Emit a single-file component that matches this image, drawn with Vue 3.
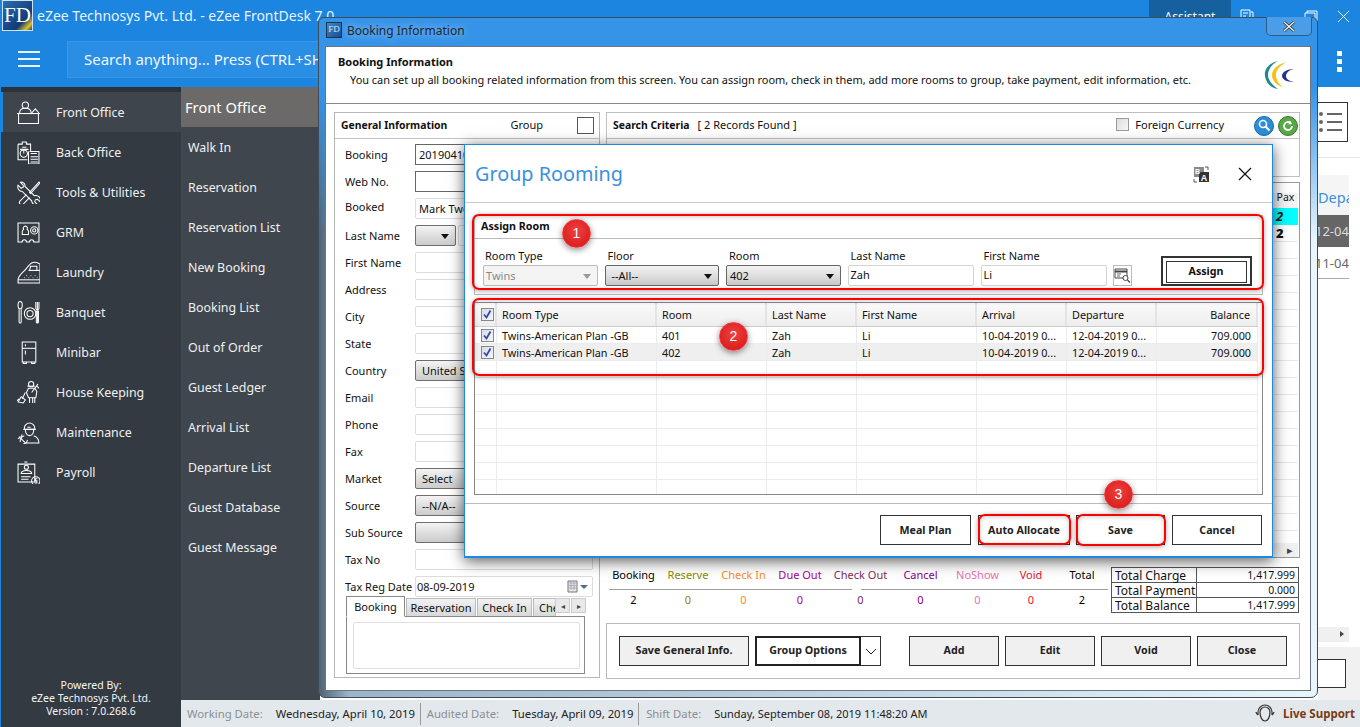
<script setup>
const menu = [
  { t: 'Front Office', p: ['M5 4a3 3 0 1 0 6 0a3 3 0 1 0-6 0', 'M2.5 11.5c0-3 2.200-4.500 5.500-4.500s5.500 1.500 5.500 4.500', 'M14 11.500l3.500-4l3.500 4', 'M0 12h22', 'M1.500 12.500v9h19v-9'] },
  { t: 'Back Office', p: ['M1 3h4V1h4v2h4v7M1 3v15h9', 'M5 6h4M3 8h8', 'M3 12a3.500 3.500 0 1 0 7 0a3.500 3.500 0 1 0-7 0', 'M6.500 12V8.500', 'M12 10h9v12h-10v-12', 'M13 12h6M13 15h7M13 17.500h7M13 20h7'] },
  { t: 'Tools & Utilities', p: ['M3 1l3 3v2l-2 1l-3-3c-1 3 1 6 4 6l9 9c.5 3 3 4.500 6 4l-3-3l.5-2l2-.5l3 2.500c.5-4-2-7-6-6l-9-9c.5-2-1-4-4-4', 'M21 1l-9 10l1 1l9-10z', 'M9 13l-6 6c-1 1-1 2 0 3s2 1 3 0l6-6'] },
  { t: 'GRM', p: ['M1 2h20v18h-5a2 2 0 0 0-4 0h-3a2 2 0 0 0-4 0h-4z', 'M5 13v-3c0-1 .8-1.500 1.300-2a2 2 0 1 1 3.400 0c.5.500 1.300 1 1.300 2v3z', 'M13 9a3.500 3.500 0 1 0 7 0a3.500 3.500 0 1 0-7 0', 'M15 9a1.500 1.500 0 1 0 3 0a1.500 1.500 0 1 0-3 0'] },
  { t: 'Laundry', p: ['M22 3c-3-2-6-2-8-1c-2 1-3 3-5 5c-3 4-8 7-8 11v3h21z', 'M1 18h21', 'M13 5h6v4h-7z', 'M9 14h.6M13 14h.6M17 14h.6M7 16h.6M11 16h.6M15 16h.6M19 16h.6', 'M11 9h11'] },
  { t: 'Banquet', p: ['M1 4a2 3.500 0 1 0 4 0a2 3.500 0 1 0-4 0', 'M2 8v12a1 1 0 0 0 2 0V8', 'M7 12a5.500 5.500 0 1 0 11 0a5.500 5.500 0 1 0-11 0', 'M9.500 12a3 3 0 1 0 6 0a3 3 0 1 0-6 0', 'M18 1v6c0 2 3 2 3 0V1M19.500 1v20', 'M18.500 9v11a1 1 0 0 0 2 0V9'] },
  { t: 'Minibar', p: ['M5 1h13v19H5z', 'M5 7h13', 'M8 3v2M8 9v4', 'M6 20v1.500h3V20M14 20v1.500h3V20'] },
  { t: 'House Keeping', p: ['M11 3a2.500 2.500 0 1 0 5 0a2.500 2.500 0 1 0-5 0', 'M10 5h7', 'M11 7l-2 4l2 5h7l1-6l-2-3z', 'M20 3l-6 8M19 5l2 2', 'M12 16v5M15 16v5M17 16v5', 'M8 11L5 17', 'M1 20l3-5l4 3l-2 3z', 'M2 17l-2 2'] },
  { t: 'Maintenance', p: ['M7 7a5 5 0 0 1 10 0v1h-10z', 'M6 8h12', 'M8 8c0 4 2 6 4 6s4-2 4-6', 'M10 6h3', 'M7 14c-3 1-4 3-4 6', 'M16 14c3 1 5 3 5 7H8', 'M2 15l6 6M1 17l3-2l1-2M6 22l3-1l1-3'] },
  { t: 'Payroll', p: ['M1 3h16v17H1z', 'M7 1h3', 'M7 6a2 2 0 1 0 4 0a2 2 0 1 0-4 0', 'M4 12c0-2 2-3 5-3s5 1 5 3z', 'M4 15h9M4 17.500h7', 'M14 19a4 4 0 1 0 8 0a4 4 0 1 0-8 0', 'M19.500 17h-2v2h1.500v2h-2'] },
]
const links = ['Walk In', 'Reservation', 'Reservation List', 'New Booking', 'Booking List', 'Out of Order', 'Guest Ledger', 'Arrival List', 'Departure List', 'Guest Database', 'Guest Message']
const form = [
  { l: 'Booking', k: 'dark', v: '20190410' },
  { l: 'Web No.', k: 'dark', v: '' },
  { l: 'Booked', k: 'plain', v: 'Mark Twen', up: true },
  { l: 'Last Name', k: 'pair', v: '' },
  { l: 'First Name', k: 'plain', v: '' },
  { l: 'Address', k: 'plain', v: '' },
  { l: 'City', k: 'plain', v: '' },
  { l: 'State', k: 'plain', v: '' },
  { l: 'Country', k: 'sel', v: 'United States' },
  { l: 'Email', k: 'plain', v: '' },
  { l: 'Phone', k: 'plain', v: '' },
  { l: 'Fax', k: 'plain', v: '' },
  { l: 'Market', k: 'sel', v: 'Select' },
  { l: 'Source', k: 'sel', v: '--N/A--' },
  { l: 'Sub Source', k: 'sel', v: '' },
  { l: 'Tax No', k: 'plain', v: '' },
]
const stats = [
  ['Booking', '2', '#000'], ['Reserve', '0', '#8a8a00'], ['Check In', '0', '#f98a1e'], ['Due Out', '0', '#a4009c'],
  ['Check Out', '0', '#7c2c5c'], ['Cancel', '0', '#84008c'], ['NoShow', '0', '#ef6fae'], ['Void', '0', '#e8102c'], ['Total', '2', '#000'],
]
const totals = [['Total Charge', '1,417.999'], ['Total Payment', '0.000'], ['Total Balance', '1,417.999']]
const heads = ['Room Type', 'Room', 'Last Name', 'First Name', 'Arrival', 'Departure', 'Balance']
const rooms = [
  ['Twins-American Plan -GB', '401', 'Zah', 'Li', '10-04-2019 0...', '12-04-2019 0...', '709.000'],
  ['Twins-American Plan -GB', '402', 'Zah', 'Li', '10-04-2019 0...', '12-04-2019 0...', '709.000'],
]
const blanks = 8
const paxRows = 19
</script>

<template>
  <div class="app">
    <header class="top">
      <div class="titlerow">
        <div class="logo"><span>FD</span></div>
        <span class="apptitle">eZee Technosys Pvt. Ltd. - eZee FrontDesk 7.0</span>
        <div class="winctl">
          <span class="assistant">Assistant</span>
          <svg class="ctl" width="14" height="14" viewBox="0 0 14 14" fill="none" stroke="#fff"><path d="M1 1h9v9H1zM3 4h5M3 7h3M11 3h2v10H4v-2" /></svg>
          <svg class="ctl2" width="14" height="14" viewBox="0 0 14 14" fill="none" stroke="#fff"><path d="M1 3h10v10H1zM3 3V1h10v10h-2" /></svg>
          <svg class="ctl3" width="13" height="13" viewBox="0 0 14 14" fill="none" stroke="#fff"><path d="M1 1l12 12M13 1L1 13" /></svg>
        </div>
      </div>
      <div class="searchrow">
        <div class="burger"><i></i><i></i><i></i></div>
        <div class="search">Search anything... Press (CTRL+SHIFT+S)</div>
        <div class="kebab"><i></i><i></i><i></i></div>
      </div>
    </header>

    <div class="shell">
      <aside class="side">
        <div class="strip"></div>
        <nav class="sidenav">
          <a v-for="(m, i) in menu" :key="m.t" class="sideitem" :class="{ active: i === 0 }">
            <svg width="23" height="23" viewBox="0 0 22 22" fill="none" stroke="#fff" stroke-width="1"><path v-for="d in m.p" :key="d" :d="d" /></svg>
            <span>{{ m.t }}</span>
          </a>
        </nav>
        <div class="powered">Powered By:<br />eZee Technosys Pvt. Ltd.<br />Version : 7.0.268.6</div>
      </aside>

      <div class="rightside">
        <div class="mainrow">
          <section class="submenu">
            <h2>Front Office</h2>
            <a v-for="l in links" :key="l">{{ l }}</a>
          </section>
          <section class="peek">
            <div class="peekbar">
              <div class="listbtn"><i></i><i></i><i></i></div>
            </div>
            <div class="peekhead"><span>Depa</span></div>
            <div class="peekdark"><span>12-04</span></div>
            <div class="peekrow"><span>11-04</span></div>
            <div class="peekfill"></div>
            <div class="peekscroll"><b></b></div>
            <div class="peekfoot"><div class="peekbox"></div></div>
          </section>
        </div>
        <footer class="status">
          <span class="slabel">Working Date:</span><span class="sval w1">Wednesday, April 10, 2019</span>
          <span class="slabel">Audited Date:</span><span class="sval w2">Tuesday, April 09, 2019</span>
          <span class="slabel">Shift Date:</span><span class="sval w3">Sunday, September 08, 2019 11:48:20 AM</span>
          <span class="live">
            <svg width="20" height="22" viewBox="0 0 20 22" fill="none" stroke="#333" stroke-width="1.200"><path d="M3 12V9a7 7 0 0 1 14 0v3M5 9a5 5 0 0 1 10 0c0 5-2 9-5 9s-5-4-5-9zM3 12c-1-1-2-2-2-3M17 12c1-1 2-2 2-3" /></svg>
            Live Support
          </span>
        </footer>
      </div>
    </div>

    <!-- Booking Information window -->
    <div class="win">
      <div class="wintitle">
        <div class="minilogo">FD</div>
        <span>Booking Information</span>
        <div class="winclose">
          <svg width="14" height="11" viewBox="0 0 14 11"><path d="M2 1l10 9M12 1L2 10" stroke="#222" stroke-width="2.600" fill="none" /><path d="M2 1l10 9M12 1L2 10" stroke="#fff" stroke-width="1.200" fill="none" /></svg>
        </div>
      </div>
      <div class="wininner">
        <div class="banner">
          <div>
            <b>Booking Information</b>
            <p>You can set up all booking related information from this screen. You can assign room, check in them, add more rooms to group, take payment, edit information, etc.</p>
          </div>
          <svg class="ezee" width="32" height="30" viewBox="0 0 32 30" fill="none">
            <path d="M14 1C5 3 0 9 1 16c1 7 6 12 13 13C8 25 4 20 4 15 4 9 8 4 14 1z" fill="#1f8a8a" />
            <path d="M23 2C14 4 8 9 8 15c0 6 5 10 11 12-4-3-7-7-7-12 0-6 5-10 11-13z" fill="#f2c21a" />
            <path d="M30 9c-7 0-12 3-12 7 0 3 4 6 12 6-5-1-8-3-8-6 0-3 3-6 8-7z" fill="#27348b" />
          </svg>
        </div>

        <div class="columns">
          <section class="general">
            <div class="phead">
              <b>General Information</b>
              <span class="grouplabel">Group</span>
              <span class="bigcheck"></span>
            </div>
            <div class="formrows">
              <div v-for="r in form" :key="r.l" class="frow">
                <label :class="{ up: r.up }">{{ r.l }}</label>
                <div v-if="r.k === 'pair'" class="pair">
                  <div class="fsel small"><em></em></div>
                  <div class="finput plain"></div>
                </div>
                <div v-else-if="r.k === 'sel'" class="fsel"><span>{{ r.v }}</span><em></em></div>
                <div v-else class="finput" :class="r.k">{{ r.v }}</div>
              </div>
              <div class="frow taxdate">
                <label>Tax Reg Date</label>
                <div class="finput plain date">
                  <span>08-09-2019</span>
                  <svg width="22" height="13" viewBox="0 0 22 13" fill="none"><path d="M1 1h9v11H1z" fill="#e6e6e6" stroke="#777" /><path d="M2 3h7M2 5.500h7M2 8h7M4 2v8M7 2v8" stroke="#99a" stroke-width=".7" /><path d="M13 5h8l-4 4z" fill="#556a88" /></svg>
                </div>
              </div>
            </div>
            <div class="tabs">
              <span class="tab on">Booking</span>
              <span class="tab t2">Reservation</span>
              <span class="tab t3">Check In</span>
              <span class="tab t4">Che</span>
              <span class="tabarrows"><i>◂</i><i>▸</i></span>
            </div>
            <div class="tabbody"><div class="tabarea"></div></div>
          </section>

          <div class="rightcol">
            <section class="criteria">
              <div class="phead">
                <b>Search Criteria</b>
                <span class="found">[ 2 Records Found ]</span>
                <span class="foreign"><i class="smallcheck"></i>Foreign Currency</span>
                <svg class="round" width="20" height="20" viewBox="0 0 20 20"><circle cx="10" cy="10" r="9.500" fill="#2a8fd8" stroke="#1a6aa8" /><circle cx="9" cy="8" r="3.500" fill="none" stroke="#fff" stroke-width="1.600" /><path d="M11.500 10.500l4 4" stroke="#fff" stroke-width="2" /></svg>
                <svg class="round" width="20" height="20" viewBox="0 0 20 20"><circle cx="10" cy="10" r="9.500" fill="#58a848" stroke="#3a7a30" /><path d="M14 10a4 4 0 1 1-1.500-3.100" fill="none" stroke="#fff" stroke-width="1.800" /><path d="M12 4.500l2 3.500l-3.500.5z" fill="#fff" /></svg>
              </div>
            </section>

            <section class="bookgrid">
              <div class="paxcol">
                <div class="paxhead">Pax</div>
                <div class="paxcell cyan"><i>2</i></div>
                <div class="paxcell"><b>2</b></div>
                <div v-for="n in paxRows" :key="n" class="paxcell"></div>
              </div>
              <div class="hscroll"><span>▸</span></div>
            </section>

            <section class="summary">
              <div class="stats">
                <div class="statlabels">
                  <span v-for="s in stats" :key="s[0]" :style="{ color: s[2] }">{{ s[0] }}</span>
                </div>
                <div class="statline"></div>
                <div class="statlabels vals">
                  <span v-for="s in stats" :key="s[0]" :style="{ color: s[2] }">{{ s[1] }}</span>
                </div>
              </div>
              <table class="totals">
                <tbody>
                  <tr v-for="t in totals" :key="t[0]"><td>{{ t[0] }}</td><td class="num">{{ t[1] }}</td></tr>
                </tbody>
              </table>
            </section>

            <section class="actions">
              <button class="gray wsave">Save General Info.</button>
              <div class="splitbtn">
                <button class="main">Group Options</button>
                <button class="caret"><svg width="12" height="7" viewBox="0 0 12 7" fill="none" stroke="#222"><path d="M1 1l5 5l5-5" /></svg></button>
              </div>
              <button class="gray wact first">Add</button>
              <button class="gray wact">Edit</button>
              <button class="gray wact">Void</button>
              <button class="gray wact">Close</button>
            </section>
          </div>
        </div>
      </div>
    </div>

    <!-- Group Rooming dialog -->
    <div class="modal">
      <div class="mhead">
        <h1>Group Rooming</h1>
        <svg class="trans" width="17" height="17" viewBox="0 0 17 17">
          <path d="M1 1h10v10H1z" fill="#8a8a8a" />
          <path d="M6 6h10v10H6z" fill="#333" />
          <path d="M12 1h3M15 1v3M1 13v3h3" stroke="#555" fill="none" />
          <text x="11" y="14.500" font-size="9" font-weight="700" fill="#fff" text-anchor="middle" font-family="Liberation Sans">A</text>
          <text x="4.500" y="8" font-size="7" font-weight="700" fill="#fff" text-anchor="middle" font-family="Liberation Sans">B</text>
        </svg>
        <svg width="14" height="14" viewBox="0 0 14 14" class="mclose"><path d="M1 1l12 12M13 1L1 13" stroke="#111" stroke-width="1.200" fill="none" /></svg>
      </div>
      <div class="mbody">
        <section class="assign">
          <div class="ahead"><b>Assign Room</b></div>
          <div class="afields">
            <div class="afield f1"><label>Room Type</label><div class="asel disabled"><span>Twins</span><em></em></div></div>
            <div class="afield f1"><label>Floor</label><div class="asel"><span>--All--</span><em></em></div></div>
            <div class="afield f1"><label>Room</label><div class="asel roomsel"><span>402</span><em></em></div></div>
            <div class="afield f2"><label>Last Name</label><div class="atext">Zah</div></div>
            <div class="afield f2"><label>First Name</label><div class="atext">Li</div></div>
            <div class="pick">
              <svg width="17" height="15" viewBox="0 0 17 15" fill="none" stroke="#444"><path d="M1 1h12v9H1z" /><path d="M1 3.500h12" stroke-width="2" /><path d="M3 6h4M3 8h3" stroke-width=".8" /><circle cx="11.500" cy="10" r="2.500" fill="#fff" /><path d="M13.500 12l2.500 2.500" stroke-width="1.300" /></svg>
            </div>
            <div class="assignbtn"><span>Assign</span></div>
          </div>
        </section>

        <section class="mgrid">
          <div class="mrow mheadrow">
            <div class="cell chk"><i class="tick"><svg width="13" height="13" viewBox="0 0 13 13"><path d="M3 6.500l2.500 3l4-7" stroke="#3a4a9a" stroke-width="1.800" fill="none" /></svg></i></div>
            <div v-for="(h, i) in heads" :key="h" class="cell" :class="{ right: i === 6 }">{{ h }}</div>
          </div>
          <div v-for="(r, ri) in rooms" :key="r[1]" class="mrow" :class="{ alt: ri === 1 }">
            <div class="cell chk"><i class="tick"><svg width="13" height="13" viewBox="0 0 13 13"><path d="M3 6.500l2.500 3l4-7" stroke="#3a4a9a" stroke-width="1.800" fill="none" /></svg></i></div>
            <div v-for="(c, i) in r" :key="i" class="cell" :class="{ right: i === 6 }">{{ c }}</div>
          </div>
          <div v-for="n in blanks" :key="n" class="mrow empty">
            <div v-for="c in 8" :key="c" class="cell" :class="{ chk: c === 1 }"></div>
          </div>
        </section>
      </div>
      <div class="mfoot">
        <button class="wbtn">Meal Plan</button>
        <button class="wbtn">Auto Allocate</button>
        <button class="wbtn">Save</button>
        <button class="wbtn">Cancel</button>
      </div>

      <div class="mark m1"></div>
      <div class="mark m2"></div>
      <div class="mark m3"></div>
      <div class="mark m4"></div>
      <div class="badge b1">1</div>
      <div class="badge b2">2</div>
      <div class="badge b3">3</div>
    </div>
  </div>
</template>

<style>
html, body { margin: 0; padding: 0; overflow: hidden; background: #fff; }
</style>

<style scoped>
.app { position: relative; width: 1360px; height: 727px; overflow: hidden; font-family: "Noto Sans", "Open Sans", sans-serif; font-size: 11px; color: #111; display: flex; flex-direction: column; }
.top { height: 87px; background: #1b85e0; color: #fff; flex: none; }
.titlerow { height: 33px; display: flex; align-items: center; padding-left: 2px; }
.logo { width: 29px; height: 29px; margin-top: -2px; border: 1px solid #cfe2f3; background: linear-gradient(135deg, #2a6fb0, #123a78 70%, #e0c020 88%, #1a3a80); color: #fff; font: 21px/28px "Liberation Serif", serif; text-align: center; box-sizing: content-box; }
.apptitle { margin-left: 4px; margin-top: -2px; font-size: 14px; color: #e8f2fb; white-space: nowrap; }
.winctl { margin-left: auto; display: flex; align-items: flex-start; height: 33px; }
.assistant { width: 82px; height: 30px; background: #17609f; text-align: center; font-size: 12px; line-height: 34px; margin-right: 9px; }
.ctl { margin: 9px 0 0 0; }
.ctl2 { margin: 10px 0 0 50px; }
.ctl3 { margin: 10px 10px 0 19px; }
.searchrow { height: 54px; display: flex; align-items: flex-start; }
.burger { width: 22px; margin: 18px 0 0 18px; display: flex; flex-direction: column; gap: 5px; }
.burger i { display: block; height: 2px; background: #e8f3fc; }
.search { width: 252px; height: 37px; margin: 8px 0 0 27px; background: #2a8ee4; border: 1px solid #3a97e8; box-sizing: border-box; font-size: 15px; line-height: 35px; padding-left: 16px; white-space: nowrap; overflow: hidden; color: #f0f7fd; }
.kebab { margin: 18px 0 0 auto; padding-right: 18px; display: flex; flex-direction: column; gap: 3px; }
.kebab i { display: block; width: 5px; height: 5px; background: #fff; }

.shell { flex: 1; display: flex; min-height: 0; }
.side { width: 181px; flex: none; background: #333a42; border-left: 1px solid #1b85e0; box-sizing: border-box; color: #fff; display: flex; flex-direction: column; }
.strip { height: 5px; background: #2d3238; }
.sidenav { display: flex; flex-direction: column; flex: 1; }
.sideitem { height: 40px; display: flex; align-items: center; padding-left: 16px; gap: 16px; font-size: 12.400px; color: #eef0f2; box-sizing: border-box; }
.sideitem.active { background: #3f454d; border-left: 3px solid #1b85e0; margin-left: -1px; padding-left: 14px; }
.powered { text-align: center; font-size: 10.500px; line-height: 13px; padding-bottom: 9px; color: #f2f4f6; }

.rightside { flex: 1; display: flex; flex-direction: column; min-width: 0; }
.mainrow { flex: 1; display: flex; min-height: 0; }
.submenu { width: 139px; flex: none; background: #3f464d; display: flex; flex-direction: column; color: #eef0f2; }
.submenu h2 { margin: 0; height: 40px; line-height: 40px; background: #6b6a69; font-size: 14.700px; font-weight: 400; padding-left: 4px; color: #fff; }
.submenu a { height: 40px; line-height: 42px; padding-left: 7px; font-size: 12.400px; }
.peek { margin-left: auto; width: 42px; background: #fff; display: flex; flex-direction: column; }
.peekbar { height: 71px; padding-top: 15px; box-sizing: border-box; border-bottom: 1px solid #e4e4e4; }
.listbtn { width: 30px; height: 40px; box-sizing: border-box; border: 1px solid #333; border-left: 0; display: flex; flex-direction: column; justify-content: center; gap: 6px; padding-left: 9px; }
.listbtn i { display: block; width: 15px; height: 2px; background: #666; position: relative; }
.listbtn i::before { content: ""; position: absolute; left: -8px; top: -1px; width: 4px; height: 4px; border-radius: 50%; background: #666; }
.peekhead { margin-top: 17px; width: 31px; height: 40px; background: #f5f5f5; overflow: hidden; color: #3a8fe0; font-size: 14.500px; line-height: 44px; white-space: nowrap; }
.peekdark { width: 31px; height: 32px; background: #666; color: #ddd; font-size: 13px; line-height: 32px; overflow: hidden; white-space: nowrap; text-indent: -3px; }
.peekrow { width: 31px; height: 31px; border-bottom: 1px solid #aaa; color: #666; font-size: 13px; line-height: 32px; overflow: hidden; white-space: nowrap; text-indent: -3px; }
.peekfill { flex: 1; }
.peekscroll { width: 31px; height: 15px; background: #f0f0f0; position: relative; margin-bottom: 5px; }
.peekscroll b { position: absolute; right: 5px; top: 4px; border-left: 4px solid #444; border-top: 3px solid transparent; border-bottom: 3px solid transparent; }
.peekfoot { height: 53px; background: #f1f1f1; padding-top: 12px; box-sizing: border-box; }
.peekbox { width: 28px; height: 29px; background: #fff; border: 1px solid #333; border-left: 0; box-sizing: border-box; }
.status { height: 27px; flex: none; background: #e3e8ec; display: flex; align-items: center; padding-left: 6px; font-size: 11.300px; white-space: nowrap; }
.slabel { color: #8a8f94; font-size: 11.300px; }
.sval { color: #222; }
.w1 { margin-left: 13px; width: 145px; box-sizing: border-box; border-right: 1px solid #9a9a9a; line-height: 22px; margin-right: 6px; }
.w2 { margin-left: 13px; width: 127px; box-sizing: border-box; border-right: 1px solid #9a9a9a; line-height: 22px; margin-right: 7px; }
.w3 { margin-left: 13px; font-size: 11px; }
.live { margin-left: auto; margin-right: 5px; display: flex; align-items: center; gap: 8px; color: #7a3a12; font-weight: 700; font-size: 11.500px; }

.win { position: absolute; left: 318px; top: 17px; width: 1000px; height: 681px; box-sizing: border-box; border: 1px solid #3d4c58; border-radius: 6px 6px 7px 7px; padding: 0 6px 6px 6px; display: flex; flex-direction: column; background: linear-gradient(180deg, #3593e8 0, #3593e8 70px, rgba(53, 147, 232, 0) 220px), linear-gradient(90deg, #4f6272, #9ab4c8 3%, #e8f5fc 100%); }
.wintitle { height: 28px; flex: none; display: flex; align-items: center; gap: 5px; padding: 0 0 4px 1px; box-sizing: border-box; font-size: 12px; color: #1d2730; position: relative; }
.wintitle > span { text-shadow: 0 0 8px rgba(255, 255, 255, .7); }
.minilogo { width: 14px; height: 14px; background: linear-gradient(135deg, #3a8ad0, #1a4a90); border: 1px solid #234; color: #cfe6f8; font: 9px/13px "Liberation Serif", serif; text-align: center; }
.winclose { position: absolute; right: -1px; top: -1px; width: 46px; height: 19px; box-sizing: border-box; border: 1px solid #2c5d8c; border-top: 0; border-radius: 0 0 5px 5px; background: #4a9de6; display: flex; align-items: center; justify-content: center; }
.wininner { flex: 1; min-height: 0; background: #fff; border: 1px solid #6a7580; display: flex; flex-direction: column; }
.banner { height: 57px; box-sizing: border-box; border-bottom: 1px solid #888; padding: 6px 14px 0 12px; display: flex; justify-content: space-between; flex: none; }
.banner b { font-size: 11px; display: block; line-height: 17px; }
.banner p { margin: 1px 0 0 12px; font-size: 10.950px; line-height: 17px; white-space: nowrap; }
.ezee { margin-top: 7px; }
.columns { flex: 1; min-height: 0; display: grid; grid-template-columns: 266px 694px; gap: 6px; padding: 8px 0 12px 8px; }
.general { border: 1px solid #b8b8b8; display: flex; flex-direction: column; position: relative; height: 566px; box-sizing: border-box; }
.phead { height: 25px; flex: none; display: flex; align-items: center; border-bottom: 1px solid #c4c4c4; padding: 0 6px; box-sizing: content-box; }
.phead b { font-size: 10.400px; margin-top: -2px; }
.grouplabel { margin-left: auto; margin-right: 34px; margin-top: -3px; }
.bigcheck { width: 15px; height: 15px; border: 1px solid #555; margin-right: -1px; }
.formrows { padding: 2px 6px 0 10px; display: flex; flex-direction: column; }
.frow { height: 27px; display: flex; align-items: center; }
.frow label { width: 70px; flex: none; }
.frow label.up { padding-bottom: 4px; }
.finput { flex: 1; height: 21px; box-sizing: border-box; padding-left: 3px; line-height: 19px; background: #fff; white-space: nowrap; overflow: hidden; }
.finput.dark { border: 1px solid #666; }
.finput.plain { border: 1px solid #dcdcdc; border-radius: 2px; }
.pair { flex: 1; display: flex; gap: 2px; }
.pair .finput { height: 21px; }
.fsel { flex: 1; height: 21px; box-sizing: border-box; border: 1px solid #6e6e6e; border-radius: 2px; background: linear-gradient(180deg, #f4f4f4, #ddd 55%, #ccc); padding-left: 6px; line-height: 19px; position: relative; }
.fsel.small { flex: none; width: 41px; }
.fsel em, .asel em { position: absolute; right: 6px; top: 8px; border-top: 5px solid #111; border-left: 4px solid transparent; border-right: 4px solid transparent; }
.date { display: flex; align-items: center; justify-content: space-between; padding-right: 3px; padding-left: 1px; }
.taxdate label { width: 70px; }
.tabs { display: flex; align-items: flex-end; height: 21px; margin: -5px 14px 0 11px; position: relative; }
.tab { box-sizing: border-box; height: 18px; line-height: 17px; background: linear-gradient(180deg, #f2f2f2, #d8d8d8); border: 1px solid #bbb; border-bottom: 0; text-align: center; margin-right: 1px; overflow: hidden; white-space: nowrap; }
.tab.on { width: 59px; height: 21px; line-height: 19px; background: #fff; border: 1px solid #888; border-bottom: 1px solid #fff; margin-bottom: -1px; position: relative; z-index: 1; }
.t2 { width: 70px; } .t3 { width: 55px; } .t4 { width: 23px; text-align: left; padding-left: 5px; }
.tabarrows { position: absolute; right: -1px; top: 3px; display: flex; gap: 1px; }
.tabarrows i { width: 15px; height: 15px; background: #e8e8e8; border: 1px solid #ccc; font-style: normal; font-size: 8px; line-height: 13px; text-align: center; color: #445; box-sizing: border-box; }
.tabbody { margin: 0 14px 0 11px; height: 58px; box-sizing: border-box; border: 1px solid #888; padding: 5px 4px 6px 6px; }
.tabarea { height: 100%; border: 1px solid #e0e0e0; border-radius: 2px; }

.rightcol { display: flex; flex-direction: column; height: 566px; }
.criteria { height: 65px; flex: none; box-sizing: border-box; border: 1px solid #c0c0c0; }
.criteria .phead { padding: 0 1px 0 6px; }
.found { margin-left: 8px; margin-top: -2px; }
.foreign { margin-left: auto; margin-right: 26px; margin-top: -2px; display: flex; align-items: center; gap: 6px; }
.smallcheck { width: 13px; height: 13px; box-sizing: border-box; border: 1px solid #999; background: linear-gradient(135deg, #ddd, #f8f8f8); }
.round { margin-left: 4px; }
.bookgrid { margin-top: 5px; height: 376px; flex: none; box-sizing: border-box; border: 1px solid #9a9a9a; padding: 10px 1px 0 0; display: flex; flex-direction: column; align-items: flex-end; position: relative; overflow: hidden; }
.paxcol { width: 25px; flex: 1; overflow: hidden; }
.paxhead { height: 15px; background: #f3f3f3; line-height: 8px; text-align: center; font-size: 10.500px; }
.paxcell { height: 17px; box-sizing: border-box; border-bottom: 1px solid #e8e8e8; font-size: 13px; line-height: 17px; padding-left: 3px; font-weight: 700; }
.paxcell.cyan { background: #00ffff; border-bottom: 0; font-weight: 700; }
.hscroll { width: 100%; height: 14px; flex: none; background: #f0f0f0; text-align: right; padding-right: 5px; box-sizing: border-box; font-size: 11px; line-height: 13px; color: #444; }
.summary { height: 65px; flex: none; display: flex; align-items: flex-start; justify-content: space-between; }
.stats { width: 501px; padding-top: 10px; margin-left: 1px; }
.statlabels { display: grid; grid-template-columns: 53px 56px 55px 58px 63px 57px 57px 50px 52px; text-align: center; line-height: 14px; }
.statline { height: 1px; margin: 7px 0 3px 2px; background: linear-gradient(90deg, #a0a0a0 243px, transparent 243px, transparent 252px, #a0a0a0 252px); }
.vals { margin-top: 3px; }
.totals { border-collapse: collapse; margin: 9px 1px 0 0; width: 188px; line-height: 13px; table-layout: fixed; }
.totals td { border: 1px solid #555; height: 14px; padding: 0 3px; font-size: 12px; white-space: nowrap; }
.totals td:first-child { width: 85px; box-sizing: border-box; }
.totals td.num { text-align: right; font-size: 10.500px; }
.actions { flex: none; height: 56px; box-sizing: border-box; border: 1px solid #bbb; display: flex; align-items: flex-start; padding: 12px 0 0 12px; gap: 6px; }
button { font-family: inherit; font-size: 10.700px; font-weight: 700; color: #222; padding: 0; }
.gray { height: 30px; background: #f0f0f0; border: 1px solid #333; border-radius: 0; padding-bottom: 2px; }
.wsave { width: 130px; }
.wact { width: 90px; }
.first { margin-left: 22px; }
.splitbtn { display: flex; height: 30px; }
.main { width: 106px; background: #fff; border: 2px solid #222; padding-bottom: 2px; }
.caret { width: 20px; background: #fff; border: 1px solid #333; border-left: 0; display: flex; align-items: center; justify-content: center; }

.modal { position: absolute; left: 464px; top: 144px; width: 809px; height: 414px; box-sizing: border-box; background: #fff; border: 1px solid #1e88e5; border-bottom-width: 2px; box-shadow: 0 3px 14px rgba(0, 0, 0, .65); display: flex; flex-direction: column; }
.mhead { height: 57px; flex: none; box-sizing: content-box; border-bottom: 1px solid #ccc; display: flex; align-items: center; padding-left: 10px; }
.mhead h1 { margin: 0; font-size: 19.800px; font-weight: 400; color: #3a8fe0; line-height: 57px; }
.trans { margin-left: auto; margin-right: 28px; margin-top: 2px; }
.mclose { margin-right: 20px; }
.mbody { flex: 1; padding: 12px 9px 0; display: flex; flex-direction: column; gap: 7px; min-height: 0; }
.assign { height: 80px; flex: none; box-sizing: border-box; border: 1px solid #bbb; border-bottom: 1px solid #bbb; }
.ahead { height: 22px; box-sizing: content-box; border-bottom: 1px solid #bbb; padding-left: 6px; line-height: 20px; font-size: 10.700px; }
.afields { display: flex; padding: 10px 0 0 8px; gap: 7px; align-items: flex-start; }
.afield label { display: block; height: 16px; line-height: 13px; padding-left: 3px; }
.afield:first-child label { padding-left: 2px; }
.f1 { width: 114.500px; } .f2 { width: 126px; }
.asel { height: 21px; box-sizing: border-box; border: 1px solid #666; border-radius: 2px; background: linear-gradient(180deg, #f4f4f4, #ddd 55%, #c8c8c8); position: relative; padding-left: 6px; line-height: 19px; }
.asel.roomsel { padding-left: 3px; }
.asel.disabled { border-color: #bbb; background: #f4f4f4; color: #888; padding-left: 2px; }
.asel.disabled em { border-top-color: #999; }
.atext { height: 21px; box-sizing: border-box; border: 1px solid #d4d4d4; border-radius: 2px; padding-left: 2px; line-height: 18px; }
.pick { width: 19px; height: 21px; box-sizing: border-box; border: 1px solid #bbb; margin: 16px 0 0 -1px; display: flex; align-items: center; justify-content: center; }
.assignbtn { width: 91px; height: 30px; box-sizing: border-box; border: 2px solid #333; padding: 3px; margin: 7px 0 0 22px; font-weight: 700; font-size: 10.700px; }
.assignbtn span { display: block; height: 100%; border: 1px solid #333; text-align: center; line-height: 18px; }
.mgrid { flex: 1; min-height: 0; box-sizing: border-box; border: 1px solid #888; overflow: hidden; padding-right: 4px; margin-bottom: 8px; font-size: 10.800px; }
.mrow { display: grid; grid-template-columns: 22px 160px 110px 90px 120px 90px 90px 101px; height: 17px; }
.mheadrow { height: 23px; background: linear-gradient(180deg, #fafafa, #eeeeee); border-bottom: 1px solid #ccc; box-sizing: content-box; }
.mheadrow .cell { border-right: 2px solid #e4e4e4; line-height: 24px; padding-left: 5px; }
.cell { box-sizing: border-box; border-right: 1px solid #ececec; border-bottom: 1px solid #ececec; padding-left: 5px; line-height: 18px; white-space: nowrap; overflow: hidden; }
.mheadrow .cell { border-bottom: 0; }
.cell.right { text-align: right; padding-right: 6px; }
.chk { padding-left: 6px !important; display: flex; align-items: center; }
.tick { width: 13px; height: 13px; display: block; box-sizing: border-box; border: 1px solid #888; background: linear-gradient(135deg, #d8dce8, #f4f6fa); line-height: 0; }
.tick svg { margin: -1px; }
.mrow.alt { background: #efefef; }
.mfoot { height: 53px; flex: none; box-sizing: border-box; border-top: 1px solid #bbb; display: flex; justify-content: flex-end; align-items: flex-start; padding: 11px 10px 0 0; gap: 7px; }
.wbtn { width: 91px; height: 30px; background: #fff; border: 1px solid #333; }
.wbtn:nth-child(2) { width: 92px; } .wbtn:nth-child(3) { width: 89px; margin-left: -1px; } .wbtn:nth-child(4) { width: 90px; }

.mark { position: absolute; border: 2px solid #f00; border-radius: 7px; box-shadow: 0 1px 5px rgba(0, 0, 0, .35), inset 0 1px 5px rgba(0, 0, 0, .2); pointer-events: none; box-sizing: border-box; }
.m1 { left: 7px; top: 69px; width: 792px; height: 76px; }
.m2 { left: 7px; top: 153px; width: 792px; height: 78px; }
.m3 { left: 513px; top: 369px; width: 93px; height: 31px; }
.m4 { left: 611px; top: 369px; width: 90px; height: 32px; }
.badge { position: absolute; width: 29px; height: 29px; box-sizing: border-box; border-radius: 50%; background: radial-gradient(circle at 50% 40%, #f04040, #d81e1e 80%); border: 1px solid #ff3030; color: #fff; font-family: "Liberation Sans", sans-serif; font-size: 14px; line-height: 27px; text-align: center; box-shadow: 0 2px 6px rgba(0, 0, 0, .45); }
.b1 { left: 97px; top: 74px; }
.b2 { left: 254px; top: 177px; }
.b3 { left: 639px; top: 335px; }
</style>
